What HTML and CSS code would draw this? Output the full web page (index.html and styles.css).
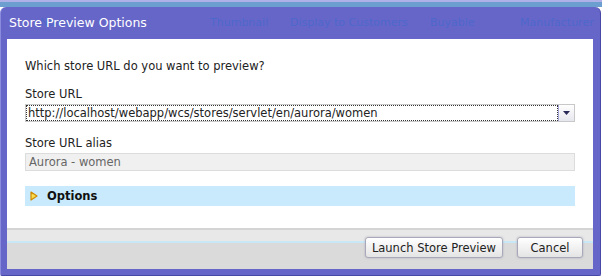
FILE: index.html
```html
<!DOCTYPE html>
<html lang="en">
<head>
  <meta charset="UTF-8" />
  <title>Store Preview Options</title>
  <link rel="stylesheet" href="styles.css">
</head>
<body>
  <div class="page-top"></div>

  <div class="dialog">
    <div class="dialog-title">
      <div class="behind-headers">
        <span class="col-name">Name</span>
        <span class="col-thumb">Thumbnail</span>
        <span class="col-display">Display to Customers</span>
        <span class="col-buy">Buyable</span>
        <span class="col-manu">Manufacturer</span>
      </div>
      <span class="title-text">Store Preview Options</span>
    </div>

    <div class="dialog-body">
      <p class="question">Which store URL do you want to preview?</p>

      <label class="field-label">Store URL</label>
      <div class="select">
        <div class="select-value">http://localhost/webapp/wcs/stores/servlet/en/aurora/women</div>
        <div class="select-btn">
          <svg width="7" height="4" viewBox="0 0 7 4"><path d="M0 0h7L3.5 4z" fill="#2a2a5a"/></svg>
        </div>
      </div>

      <label class="field-label">Store URL alias</label>
      <div class="text-input">Aurora - women</div>

      <div class="options-bar">
        <svg class="twisty" width="8" height="10" viewBox="0 0 8 10"><path d="M1 1L7 5L1 9z" fill="#f8dc50" stroke="#d08a00" stroke-width="1.2" stroke-linejoin="round"/></svg>
        <span>Options</span>
      </div>
    </div>

    <div class="dialog-footer">
      <button class="btn">Launch Store Preview</button>
      <button class="btn">Cancel</button>
    </div>
  </div>
</body>
</html>
```

FILE: styles.css
```css
html, body {
  margin: 0;
  padding: 0;
}

body {
  width: 602px;
  height: 278px;
  overflow: hidden;
  background-color: #ffffff;
  font-family: "DejaVu Sans", Verdana, sans-serif;
  font-size: 11.5px;
  color: #222;
}

.page-top {
  height: 5px;
  border-top: 2px solid #b0b0e8;
  background-color: #6c9ed0;
}

.dialog {
  width: 601px;
  box-sizing: border-box;
  background-color: #6666c8;
  border: 1px solid #4848a8;
  border-top: none;
  border-left-color: #8a8ade;
  border-radius: 6px 6px 2px 2px;
  padding: 0 7px 6px 6px;
}

.dialog-title {
  position: relative;
  height: 32px;
  display: flex;
  align-items: center;
}

.title-text {
  position: relative;
  color: #ffffff;
  font-size: 12.5px;
  margin-left: 2px;
  margin-top: -1px;
}

.behind-headers {
  position: absolute;
  left: -7px;
  right: 0;
  top: 9px;
  color: #4d68cc;
  font-size: 11px;
}

.behind-headers span {
  position: absolute;
  white-space: nowrap;
}

.col-name { left: 40px; }
.col-thumb { left: 210px; }
.col-display { left: 290px; }
.col-buy { left: 430px; }
.col-manu { left: 520px; }

.dialog-body {
  background-color: #ffffff;
  height: 189px;
  box-sizing: border-box;
  padding: 20px 18px 0 18px;
}

.question {
  margin: 0 0 14px 0;
  line-height: 14px;
}

.field-label {
  display: block;
  line-height: 14px;
  margin-bottom: 3px;
}

.select {
  display: flex;
  height: 18px;
  border: 1px solid #c8c8c8;
  box-sizing: border-box;
  margin-bottom: 14px;
}

.select-value {
  flex: 1;
  outline: 1px dotted #333;
  outline-offset: -1px;
  padding-left: 2px;
  line-height: 16px;
  white-space: nowrap;
  overflow: hidden;
}

.select-btn {
  width: 15px;
  border-left: 1px solid #a8a8d8;
  background: linear-gradient(#ffffff, #e6e6ee);
  display: flex;
  align-items: center;
  justify-content: center;
}

.text-input {
  height: 18px;
  border: 1px solid #dcdcdc;
  background-color: #f0f0f0;
  color: #666;
  box-sizing: border-box;
  padding-left: 3px;
  line-height: 16px;
  margin-bottom: 15px;
}

.options-bar {
  display: flex;
  align-items: center;
  height: 20px;
  background-color: #c8eafc;
  padding-left: 5px;
}

.options-bar span {
  font-weight: bold;
  color: #111;
  margin-left: 9px;
}

.dialog-footer {
  height: 41px;
  box-sizing: border-box;
  border-top: 2px solid #d4d4d4;
  background: linear-gradient(#e8e8e8 0, #e8e8e8 11px, #c8e8f8 11px, #c8e8f8 13px, #dadada 13px);
  display: flex;
  justify-content: flex-end;
  align-items: flex-start;
  gap: 14px;
  padding: 7px 10px 0 0;
}

.btn {
  font-family: "DejaVu Sans", Verdana, sans-serif;
  font-size: 11.5px;
  color: #222;
  height: 21px;
  padding: 0 6px;
  border: 1px solid #a8a8b8;
  border-radius: 3px;
  background: linear-gradient(#ffffff, #e4e4e4);
  box-shadow: 0 0 2px rgba(120, 120, 160, 0.5);
}

.btn:last-child {
  min-width: 66px;
}
```
